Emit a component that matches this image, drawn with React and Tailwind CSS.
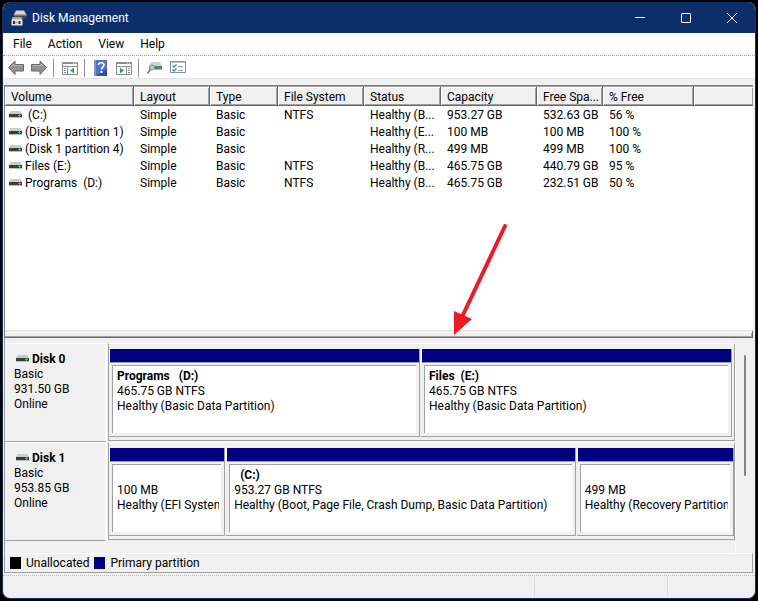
const menus = ["File", "Action", "View", "Help"];

const columns = [
  { label: "Volume", width: "w-[129px]" },
  { label: "Layout", width: "w-[76px]" },
  { label: "Type", width: "w-[68px]" },
  { label: "File System", width: "w-[86px]" },
  { label: "Status", width: "w-[77px]" },
  { label: "Capacity", width: "w-24" },
  { label: "Free Spa...", width: "w-[66px]" },
  { label: "% Free", width: "w-[91px]" },
];

const volumes = [
  [" (C:)", "Simple", "Basic", "NTFS", "Healthy (B...", "953.27 GB", "532.63 GB", "56 %"],
  ["(Disk 1 partition 1)", "Simple", "Basic", "", "Healthy (E...", "100 MB", "100 MB", "100 %"],
  ["(Disk 1 partition 4)", "Simple", "Basic", "", "Healthy (R...", "499 MB", "499 MB", "100 %"],
  ["Files (E:)", "Simple", "Basic", "NTFS", "Healthy (B...", "465.75 GB", "440.79 GB", "95 %"],
  ["Programs  (D:)", "Simple", "Basic", "NTFS", "Healthy (B...", "465.75 GB", "232.51 GB", "50 %"],
];

const disks = [
  {
    name: "Disk 0",
    size: "931.50 GB",
    grid: "grid-cols-[1fr_1fr] pr-[2px]",
    partitions: [
      { name: "Programs   (D:)", size: "465.75 GB NTFS", status: "Healthy (Basic Data Partition)" },
      { name: "Files  (E:)", size: "465.75 GB NTFS", status: "Healthy (Basic Data Partition)" },
    ],
  },
  {
    name: "Disk 1",
    size: "953.85 GB",
    grid: "grid-cols-[116fr_349fr_157fr]",
    partitions: [
      { name: "", size: "100 MB", status: "Healthy (EFI System" },
      {
        name: "  (C:)",
        size: "953.27 GB NTFS",
        status: "Healthy (Boot, Page File, Crash Dump, Basic Data Partition)",
      },
      { name: "", size: "499 MB", status: "Healthy (Recovery Partition" },
    ],
  },
];

export default function App() {
  return (
    <div className="relative flex min-h-screen flex-col bg-black p-[2px] font-[Roboto,'Open_Sans',sans-serif] text-xs text-black">
      <div className="flex flex-1 flex-col overflow-hidden rounded-lg border border-t-0 border-[#0c2f6b] bg-[#f0f0f0]">
        <TitleBar />
        <MenuBar />
        <Toolbar />
        <main className="flex flex-1 flex-col pt-[6px] pr-[2px] pl-px">
          <VolumeList />
          <DiskPane />
          <Legend />
        </main>
        <StatusBar />
      </div>
      <PointerArrow />
    </div>
  );
}

function TitleBar() {
  return (
    <header className="flex h-[31px] items-center bg-[#0c2f6b] text-white">
      <svg className="mr-[5px] ml-2 h-4 w-4" viewBox="0 0 16 16" aria-hidden="true">
        <path d="M5 0.5h8l2.5 4.5H2.5z" fill="#d4d4d4" />
        <path d="M3 4h12.5v4.5H3z" fill="#4a4a4a" />
        <path d="M3 4h12.5v1.5H3z" fill="#a2a2a2" />
        <path d="M1.5 7.5h9l1 3v5h-11v-5z" fill="#e4e4e4" />
        <path d="M1.5 7.5h9l1 2h-11z" fill="#b5b0a8" />
        <path d="M2 11h2v3H2zM7.5 11h2v3h-2z" fill="#333" />
        <path d="M4 12h3.5v1H4z" fill="#999" />
      </svg>
      <h1 className="flex-1">Disk Management</h1>
      <button aria-label="Minimize" className="flex h-full w-[46px] items-center justify-center">
        <svg className="h-[10px] w-[10px]" viewBox="0 0 10 10" stroke="#fff" fill="none">
          <path d="M0 4.5h10" />
        </svg>
      </button>
      <button aria-label="Maximize" className="flex h-full w-[46px] items-center justify-center">
        <svg className="h-[10px] w-[10px]" viewBox="0 0 10 10" stroke="#fff" fill="none">
          <rect x="0.5" y="0.5" width="9" height="9" rx="0.5" />
        </svg>
      </button>
      <button aria-label="Close" className="flex h-full w-[46px] items-center justify-center">
        <svg className="h-[10px] w-[10px]" viewBox="0 0 10 10" stroke="#fff" fill="none">
          <path d="M0 0l10 10M10 0L0 10" />
        </svg>
      </button>
    </header>
  );
}

function MenuBar() {
  return (
    <nav className="flex h-[23px] items-center gap-4 border-b border-dotted border-[#a0a0a0] bg-white pl-[10px]">
      {menus.map((menu) => (
        <button key={menu}>{menu}</button>
      ))}
    </nav>
  );
}

function Toolbar() {
  return (
    <div role="toolbar" className="flex h-[23px] items-center border-b border-[#e3e3e3] bg-white pt-[2px] pl-[5px]">
      <button aria-label="Back" className="mr-[7px]">
        <ArrowIcon />
      </button>
      <button aria-label="Forward" className="mr-[6px]">
        <ArrowIcon flipped />
      </button>
      <Separator />
      <button aria-label="Show/Hide Console Tree" className="mr-[6px] ml-2">
        <PaneIcon />
      </button>
      <Separator />
      <button aria-label="Help" className="mr-[9px] ml-[9px]">
        <svg className="h-4 w-[13px]" viewBox="0 0 13 16">
          <rect width="13" height="16" fill="#2a4fb0" />
          <path d="M0 0h2v16H0z" fill="#7d96d2" />
          <path d="M2 0h11v8L2 16z" fill="#4f72c8" />
          <path d="M4.5 5c0-3 5.5-3 5.5 0 0 2-2.5 2-2.5 4.5" fill="none" stroke="#fff" strokeWidth="1.6" />
          <rect x="6.5" y="11" width="2" height="2" fill="#fff" />
        </svg>
      </button>
      <button aria-label="Show/Hide Action Pane" className="mr-[6px]">
        <PaneIcon flipped />
      </button>
      <Separator />
      <button aria-label="Rescan Disks" className="mr-2 ml-2">
        <svg className="h-4 w-[15px]" viewBox="0 0 15 16">
          <path d="M4 2h9l2 4H2z" fill="#d2d2d2" />
          <path d="M2 6h13v3.5H2z" fill="#6a6a6a" />
          <path d="M10 7.5h4M12 6v3" stroke="#2fae4a" />
          <circle cx="5" cy="7.5" r="2.5" fill="#b9cdd6" stroke="#8d8d8d" />
          <path d="M3.5 9.5L0.5 13.5" stroke="#777" strokeWidth="1.6" />
        </svg>
      </button>
      <button aria-label="Settings">
        <svg className="h-4 w-4" viewBox="0 0 16 16">
          <path d="M0.5 1.5h15v11H0.5z" fill="#fff" stroke="#8b9298" />
          <path d="M1 2h14v1H1z" fill="#b8bec4" />
          <path d="M2.5 5.5l1.5 1.5L6.5 4.5M2.5 9.5l1.5 1.5L6.5 8.5" fill="none" stroke="#2c86d8" strokeWidth="1.3" />
          <path d="M8 6.5h5M8 10.5h5" stroke="#9a9a9a" />
        </svg>
      </button>
    </div>
  );
}

function ArrowIcon({ flipped }) {
  return (
    <svg className={`h-4 w-4 ${flipped ? "-scale-x-100" : ""}`} viewBox="0 0 16 16">
      <path
        d="M0.5 7.5L7 1v3.5h8.5v6.5H7v3.5z"
        fill="#909090"
        stroke="#666"
        strokeLinejoin="round"
      />
      <path d="M2.5 7.5L6 4v1.5h8.5" fill="none" stroke="#b4b4b4" />
    </svg>
  );
}

function Separator() {
  return <div className="h-[18px] w-px bg-[#8d8d8d]" />;
}

function PaneIcon({ flipped }) {
  return (
    <svg className="h-4 w-4" viewBox="0 0 16 16">
      <path d="M0.5 2.5h15v12H0.5z" fill="#fff" stroke="#8c8c8c" />
      <path d="M0 2h16v2H0z" fill="#8c8c8c" />
      <path d="M1 6.5h14" stroke="#8c8c8c" />
      <path d="M11 3h1M13 3h1" stroke="#fff" />
      {flipped ? (
        <>
          <path d="M10.5 7v8" stroke="#8c8c8c" />
          <path d="M12 8.5h2M12 10.5h2M12 12.5h2" stroke="#6f86a3" />
          <path d="M4 7.5v6l4-3z" fill="#2faa3c" />
        </>
      ) : (
        <>
          <path d="M5.5 7v8" stroke="#8c8c8c" />
          <path d="M2 8.5h2M2 10.5h2M2 12.5h2" stroke="#6f86a3" />
          <path d="M12 7.5v6l-4-3z" fill="#2faa3c" />
        </>
      )}
    </svg>
  );
}

function DriveIcon() {
  return (
    <svg className="h-[10px] w-[13px] shrink-0" viewBox="0 0 13 10" aria-hidden="true">
      <path d="M1.5 0h10L13 3.5H0z" fill="#cbcbcb" />
      <path d="M0 3h13v4H0z" fill="#bdbdbd" />
      <path d="M0 3h13v3H0z" fill="#3f3b3b" />
      <path d="M9 4.5h3M10.5 3v3" stroke="#2bd04a" />
    </svg>
  );
}

function VolumeList() {
  return (
    <section className="flex flex-1 flex-col border-t border-l border-[#808080] bg-white">
      <table className="w-full table-fixed border-separate border-spacing-0 text-left whitespace-pre">
        <thead>
          <tr className="h-5 leading-4">
            {columns.map((col) => (
              <th
                key={col.label}
                scope="col"
                className={`${col.width} border-t border-r border-b border-t-[#a0a0a0] border-r-[#696969] border-b-[#696969] bg-[#f0f0f0] p-0 pt-px pl-[6px] font-normal shadow-[inset_1px_1px_#fff,inset_-1px_-1px_#a0a0a0]`}
              >
                {col.label}
              </th>
            ))}
            <td className="border-t border-b border-t-[#a0a0a0] border-b-[#696969] bg-[#f0f0f0] p-0 shadow-[inset_1px_1px_#fff,inset_-1px_-1px_#a0a0a0]" />
          </tr>
        </thead>
        <tbody>
          {volumes.map((cells) => (
            <tr key={cells[0]} className="h-[17px] leading-[15px]">
              {cells.map((cell, idx) => (
                <td key={idx} className="p-0 pt-[2px] pl-[6px]">
                  {idx === 0 ? (
                    <div className="-ml-[2px] flex items-center gap-[3px]">
                      <DriveIcon />
                      {cell}
                    </div>
                  ) : (
                    cell
                  )}
                </td>
              ))}
              <td className="p-0" />
            </tr>
          ))}
        </tbody>
      </table>
      {/* Splitter */}
      <div className="mt-auto h-2 border-t-2 border-r border-b border-t-[#e8e8e8] border-r-[#696969] border-b-[#696969] bg-[#f0f0f0] shadow-[inset_0_1px_#fff,inset_-1px_-1px_#a0a0a0]" />
    </section>
  );
}

function DiskPane() {
  return (
    <section className="flex border-l border-[#a0a0a0] pt-[5px]">
      <div className="min-w-0 flex-1 border-r border-white pb-3">
        {disks.map((disk) => (
          <DiskRow key={disk.name} disk={disk} />
        ))}
      </div>
      <div className="flex w-[17px] justify-center pt-3">
        <div className="h-[121px] w-[2px] rounded-full bg-[#858585]" />
      </div>
    </section>
  );
}

function DiskRow({ disk }) {
  return (
    <div className="flex h-[99px]">
      <div className="w-[102px] border-t border-r-2 border-b border-t-white border-r-white border-b-[#a0a0a0] pt-2 pl-[9px] leading-[15px]">
        <h2 className="flex items-center gap-[3px] pl-[2px] font-bold">
          <DriveIcon />
          {disk.name}
        </h2>
        <p>Basic</p>
        <p>{disk.size}</p>
        <p>Online</p>
      </div>
      <div className="mb-px ml-px min-w-0 flex-1 border-t border-r border-b border-l border-t-white border-r-[#a0a0a0] border-b-[#a0a0a0] border-l-[#a0a0a0] pt-[5px] pb-[3px]">
        <div className={`grid h-full gap-px ${disk.grid}`}>
          {disk.partitions.map((part) => (
            <Partition key={part.name + part.size} part={part} />
          ))}
        </div>
      </div>
    </div>
  );
}

function Partition({ part }) {
  return (
    <div className="flex min-w-0 flex-col border-r border-b border-[#a0a0a0]">
      <div className="h-[14px] border-b border-l border-b-[#a0a0a0] border-l-white bg-[#000080]" />
      <div className="mt-[2px] mr-[3px] mb-[3px] ml-[3px] flex-1 overflow-hidden border-t border-l border-[#a0a0a0] bg-white pt-[3px] pr-[2px] pl-1 leading-[15px] whitespace-pre">
        <div className="overflow-hidden">
          <h3 className="h-[15px] font-bold">{part.name}</h3>
          <p>{part.size}</p>
          <p>{part.status}</p>
        </div>
      </div>
    </div>
  );
}

function Legend() {
  return (
    <div className="flex h-5 items-center gap-[5px] border border-t-white border-r-[#a0a0a0] border-b-[#a0a0a0] border-l-[#a0a0a0] pl-[5px]">
      <span className="h-3 w-[11px] bg-black" />
      <span>Unallocated</span>
      <span className="h-3 w-[11px] bg-[#000080]" />
      <span>Primary partition</span>
    </div>
  );
}

function StatusBar() {
  return (
    <footer className="mt-[2px] flex h-[23px] border-t border-dotted border-[#bdbdbd]">
      <div className="my-px flex-1 border-r border-[#dcdcdc]" />
      <div className="my-px w-[133px] border-r border-[#dcdcdc]" />
      <div className="w-[87px]" />
    </footer>
  );
}

/* Red callout pointing at the gap between the two panes */
function PointerArrow() {
  return (
    <svg
      className="pointer-events-none absolute top-[222px] left-[450px] h-[114px] w-[60px]"
      viewBox="0 0 60 114"
      aria-hidden="true"
    >
      <path d="M55 4L12 95" stroke="#ed1c24" strokeWidth="4" strokeLinecap="round" />
      <path d="M4 89l18 8L4 113z" fill="#ed1c24" />
    </svg>
  );
}
